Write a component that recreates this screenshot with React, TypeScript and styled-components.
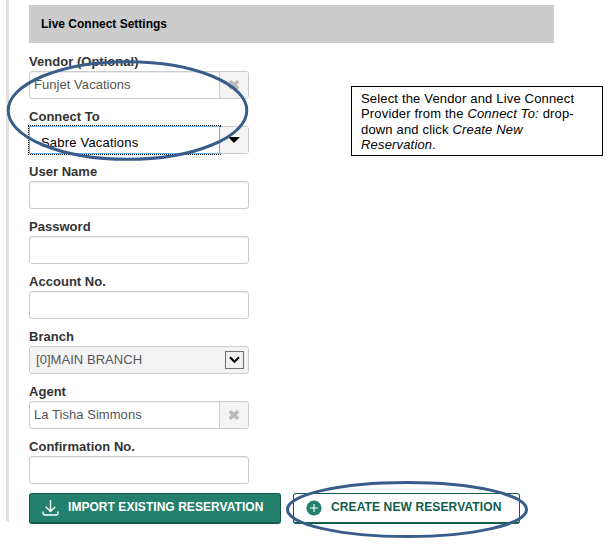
import React from "react";
import styled, { createGlobalStyle } from "styled-components";

const GlobalStyle = createGlobalStyle`
  * { box-sizing: border-box; }
  body {
    margin: 0;
    background: #fff;
    color: #333;
    font-family: "Liberation Sans", Arial, sans-serif;
    font-size: 13px;
  }
`;

const Page = styled.main`
  position: relative;
  width: 610px;
  height: 548px;
  padding-left: 6px;
  overflow: hidden;
`;

const Panel = styled.section`
  height: 522px;
  padding: 5px 0 0 20px;
  border-left: 3px solid #e1e1e1;
  border-bottom-left-radius: 3px;
`;

const SectionTitle = styled.h2`
  width: 525px;
  height: 38px;
  margin: 0;
  padding-left: 12px;
  background: #ccc;
  color: #000;
  font-size: 12px;
  line-height: 38px;
`;

const Columns = styled.div`
  display: flex;
  align-items: flex-start;
  gap: 102px;
`;

const Form = styled.form`
  width: 220px;
  padding-top: 10px;
`;

const Field = styled.div`
  height: 55px;
`;

const Label = styled.label`
  display: block;
  height: 18px;
  color: #333;
  font-weight: bold;
  line-height: 17px;
  white-space: nowrap;
  letter-spacing: 0.03px;
`;

const Control = styled.div<{ $muted?: boolean }>`
  display: flex;
  height: 28px;
  overflow: hidden;
  border: 1px solid #ccc;
  border-radius: 3px;
  background: ${(p) => (p.$muted ? "#f4f4f4" : "#fff")};
  box-shadow: ${(p) => (p.$muted ? "none" : "inset 0 1px 1px rgba(0, 0, 0, 0.075)")};
`;

const FocusControl = styled(Control)`
  overflow: visible;
  box-shadow: none;
`;

const Value = styled.span<{ $inset?: number }>`
  flex: 1;
  padding-left: ${(p) => p.$inset ?? 4}px;
  color: #555;
  line-height: 26px;
  letter-spacing: 0.05px;
  white-space: nowrap;
`;

const FocusedValue = styled.span`
  flex: none;
  width: 191px;
  height: 28px;
  margin: -1px 0 0 -1px;
  padding-left: 11px;
  border: 1px solid #66afe9;
  outline: 1px dotted #000;
  background: #fff;
  color: #000;
  line-height: 31px;
  letter-spacing: 0.2px;
  white-space: nowrap;
`;

const AddOn = styled.span<{ $divided?: boolean }>`
  display: flex;
  align-items: center;
  justify-content: center;
  width: ${(p) => (p.$divided ? 29 : 28)}px;
  border-left: ${(p) => (p.$divided ? "1px solid #ccc" : "none")};
  background: #f4f4f4;
`;

const SelectArrow = styled.span`
  display: flex;
  align-items: center;
  justify-content: center;
  width: 19px;
  height: 18px;
  margin: 4px 4px 0 0;
  border: 1px solid #707070;
  background: #f1f1f1;
`;

const Callout = styled.aside`
  width: 252px;
  height: 70px;
  margin-top: 43px;
  padding: 4px 0 0 9px;
  border: 1px solid #000;
  color: #000;
  line-height: 15.4px;
  letter-spacing: 0.17px;
  white-space: nowrap;
`;

const Actions = styled.div`
  display: flex;
  gap: 12px;
`;

const Button = styled.button<{ $primary?: boolean }>`
  display: flex;
  align-items: center;
  width: ${(p) => (p.$primary ? 252 : 227)}px;
  height: 31px;
  padding: 0 0 2px 12px;
  gap: 9px;
  border: 1px solid #125c4c;
  border-bottom-width: 2px;
  border-radius: 3px;
  background: ${(p) => (p.$primary ? "#23806d" : "#fff")};
  color: ${(p) => (p.$primary ? "#fff" : "#125c4c")};
  font: bold 12px "Liberation Sans", Arial, sans-serif;
  letter-spacing: ${(p) => (p.$primary ? 0.05 : 0.12)}px;
  white-space: nowrap;
`;

const ButtonIcon = styled.svg`
  flex: none;
  margin-top: 2px;
`;

const Marks = styled.svg`
  position: absolute;
  inset: 0;
  pointer-events: none;
`;

const Cross = () => (
  <svg width="12" height="10" viewBox="0 0 12 10">
    <path d="M1.8 1.2 10.2 8.8M10.2 1.2 1.8 8.8" stroke="#b9b9b9" strokeWidth="3.5" />
  </svg>
);

const Clearable = ({ label, value }: { label: string; value: string }) => (
  <Field>
    <Label>{label}</Label>
    <Control>
      <Value>{value}</Value>
      <AddOn $divided><Cross /></AddOn>
    </Control>
  </Field>
);

const Blank = ({ label }: { label: string }) => (
  <Field>
    <Label>{label}</Label>
    <Control />
  </Field>
);

export default function App() {
  return (
    <Page>
      <GlobalStyle />
      <Panel>
        <SectionTitle>Live Connect Settings</SectionTitle>
        <Columns>
          <Form>
            <Clearable label="Vendor (Optional)" value="Funjet Vacations" />
            <Field>
              <Label>Connect To</Label>
              <FocusControl $muted>
                <FocusedValue>Sabre Vacations</FocusedValue>
                <AddOn>
                  <svg width="12" height="6" viewBox="0 0 12 6">
                    <path d="M0 0h12L6 6z" fill="#000" />
                  </svg>
                </AddOn>
              </FocusControl>
            </Field>
            <Blank label="User Name" />
            <Blank label="Password" />
            <Blank label="Account No." />
            <Field>
              <Label>Branch</Label>
              <Control $muted>
                <Value $inset={6}>[0]MAIN BRANCH</Value>
                <SelectArrow>
                  <svg width="11" height="8" viewBox="0 0 11 8">
                    <path d="m1 1.3 4.5 4.5L10 1.3" fill="none" stroke="#000" strokeWidth="2" />
                  </svg>
                </SelectArrow>
              </Control>
            </Field>
            <Clearable label="Agent" value="La Tisha Simmons" />
            <Blank label="Confirmation No." />
          </Form>
          <Callout>
            Select the Vendor and Live Connect<br />
            Provider from the <i>Connect To:</i> drop-<br />
            down and click <i>Create New<br />Reservation</i>.
          </Callout>
        </Columns>
        <Actions>
          <Button $primary>
            <ButtonIcon width="17" height="16" viewBox="0 0 17 16" fill="none" stroke="#fff" strokeWidth="1.4">
              <path d="M8.5 0v11M3.7 6.7l4.8 4.8 4.8-4.8M1 11.5v1.8q0 1.7 1.7 1.7h11.6q1.7 0 1.7-1.7v-1.8" />
            </ButtonIcon>
            IMPORT EXISTING RESERVATION
          </Button>
          <Button>
            <ButtonIcon width="16" height="16" viewBox="0 0 16 16">
              <circle cx="8" cy="8" r="7.6" fill="#23806d" />
              <path d="M8 4v8M4 8h8" stroke="#fff" strokeWidth="1.1" />
            </ButtonIcon>
            CREATE NEW RESERVATION
          </Button>
        </Actions>
      </Panel>
      <Marks width="610" height="548" viewBox="0 0 610 548" fill="none" stroke="#385d8a" strokeWidth="3">
        <ellipse cx="127.5" cy="110.5" rx="119.3" ry="48.8" />
        <ellipse cx="407" cy="509.5" rx="119.5" ry="27" />
      </Marks>
    </Page>
  );
}
